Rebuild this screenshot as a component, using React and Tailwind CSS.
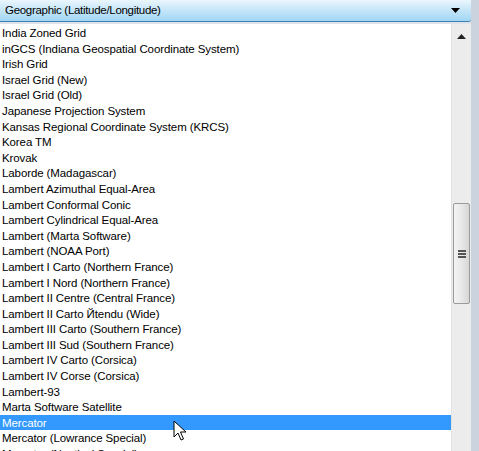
import React from "react"

const items = [
  "India Zoned Grid",
  "inGCS (Indiana Geospatial Coordinate System)",
  "Irish Grid",
  "Israel Grid (New)",
  "Israel Grid (Old)",
  "Japanese Projection System",
  "Kansas Regional Coordinate System (KRCS)",
  "Korea TM",
  "Krovak",
  "Laborde (Madagascar)",
  "Lambert Azimuthal Equal-Area",
  "Lambert Conformal Conic",
  "Lambert Cylindrical Equal-Area",
  "Lambert (Marta Software)",
  "Lambert (NOAA Port)",
  "Lambert I Carto (Northern France)",
  "Lambert I Nord (Northern France)",
  "Lambert II Centre (Central France)",
  "Lambert II Carto Йtendu (Wide)",
  "Lambert III Carto (Southern France)",
  "Lambert III Sud (Southern France)",
  "Lambert IV Carto (Corsica)",
  "Lambert IV Corse (Corsica)",
  "Lambert-93",
  "Marta Software Satellite",
  "Mercator",
  "Mercator (Lowrance Special)",
  "Mercator (Nautical Special)",
]

export default function App() {
  return (
    <div
      className="w-[479px] h-[451px] overflow-hidden bg-[#cbd3df] flex flex-col"
      style={{ fontFamily: '"Liberation Sans", Arial, sans-serif' }}
    >
      {/* combo box */}
      <div className="w-[471px] h-[24px] flex flex-col">
        <div className="h-[22px] flex items-center justify-between pl-[5px] pr-[11px] bg-gradient-to-b from-[#eaf6fd] via-[#c4e5f8] to-[#a2d6f3] border-b border-[#3c7fb1] rounded-br-[3px] text-[11.5px] tracking-[-0.3px] text-black">
          <span>Geographic (Latitude/Longitude)</span>
          <svg width="9" height="5" viewBox="0 0 9 5">
            <path d="M0 0 L9 0 L4.5 5 Z" fill="#000" />
          </svg>
        </div>
        <div className="h-[2px] bg-[#dfe4ea]" />
      </div>

      {/* list */}
      <div className="relative w-[471px] flex-1 flex bg-white">
        <div className="w-[451px] pt-[1px] text-[11.5px] tracking-[-0.1px] text-black">
          {items.map((t) => (
            <div
              key={t}
              className={
                "h-[15.6px] leading-[16.6px] pl-[2px] whitespace-nowrap " +
                (t === "Mercator" ? "bg-[#3399ff] text-white" : "")
              }
            >
              {t}
            </div>
          ))}
        </div>

        {/* scrollbar */}
        <div className="w-[20px] bg-[#ececec] border-l border-[#e3e3e3] flex flex-col items-center">
          <div className="h-[20px] flex items-center justify-center mt-[2px]">
            <svg width="9" height="5" viewBox="0 0 9 5">
              <path d="M0 5 L9 5 L4.5 0 Z" fill="#222" />
            </svg>
          </div>
          <div className="mt-[157px] w-[17px] h-[101px] rounded-[2px] border border-[#9b9b9b] bg-gradient-to-r from-[#f3f3f3] via-[#e8e8e8] to-[#d6d6d6] flex items-center justify-center">
            <div className="flex flex-col gap-[1px]">
              <div className="w-[8px] h-[2px] bg-[#555]" />
              <div className="w-[8px] h-[2px] bg-[#555]" />
              <div className="w-[8px] h-[2px] bg-[#555]" />
            </div>
          </div>
        </div>

        {/* mouse pointer */}
        <svg
          className="absolute left-[173px] top-[396px]"
          width="14"
          height="22"
          viewBox="0 0 14 22"
        >
          <path
            d="M1 1 L1 17 L5 13 L8 20 L10.5 19 L7.5 12 L13 12 Z"
            fill="#fff"
            stroke="#000"
            strokeWidth="1"
            strokeLinejoin="round"
          />
        </svg>
      </div>
    </div>
  )
}
